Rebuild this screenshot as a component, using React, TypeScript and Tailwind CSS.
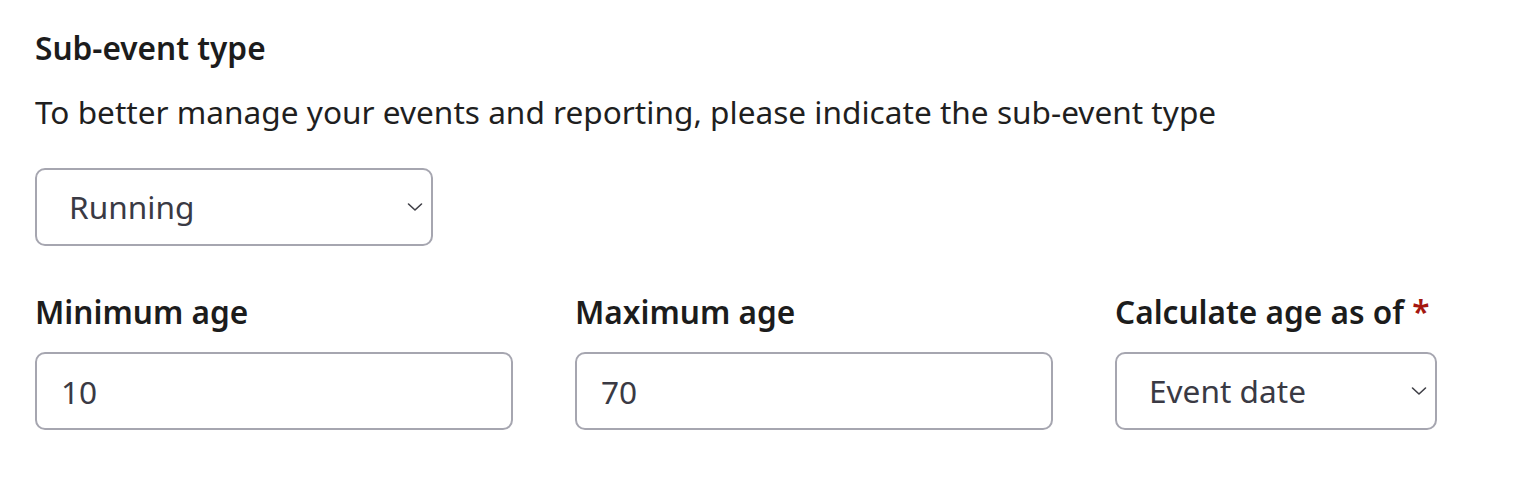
import React, { useState } from 'react';

const Chevron: React.FC = () => (
  <svg
    className="pointer-events-none absolute right-[10px] top-1/2 -translate-y-1/2"
    width="16"
    height="10"
    viewBox="0 0 16 10"
    fill="none"
  >
    <path d="M1.5 2 L8 8 L14.5 2" stroke="#3f3f46" strokeWidth="1.6" strokeLinecap="round" strokeLinejoin="round" />
  </svg>
);

interface SelectProps {
  value: string;
  options: string[];
  onChange: (v: string) => void;
  width: string;
}

const Select: React.FC<SelectProps> = ({ value, options, onChange, width }) => (
  <div className={`relative ${width}`}>
    <select
      value={value}
      onChange={(e) => onChange(e.target.value)}
      className="h-[78px] w-full appearance-none rounded-[10px] border-2 border-[#a6a6b0] bg-white pl-[32px] pr-[40px] text-[31.6px] text-[#3a3a44] outline-none"
    >
      {options.map((o) => (
        <option key={o} value={o}>
          {o}
        </option>
      ))}
    </select>
    <Chevron />
  </div>
);

export default function App() {
  const [type, setType] = useState('Running');
  const [minAge, setMinAge] = useState('10');
  const [maxAge, setMaxAge] = useState('70');
  const [asOf, setAsOf] = useState('Event date');

  return (
    <div className="min-h-[494px] bg-white pl-[35px] pt-[26px] font-['Noto_Sans',sans-serif] text-[#1c1c1c]">
      <h2 className="text-[31.6px] font-semibold leading-[44px]">Sub-event type</h2>
      <p className="mt-[20px] text-[31.6px] leading-[44px] text-[#1f1f1f]">
        To better manage your events and reporting, please indicate the sub-event type
      </p>

      <div className="mt-[34px]">
        <Select
          value={type}
          onChange={setType}
          options={['Running', 'Walking', 'Cycling', 'Swimming']}
          width="w-[398px]"
        />
      </div>

      <div className="mt-[44px] flex gap-[62px]">
        <div className="flex w-[478px] flex-col">
          <label className="text-[31.6px] font-semibold leading-[44px]">Minimum age</label>
          <input
            value={minAge}
            onChange={(e) => setMinAge(e.target.value)}
            className="mt-[18px] h-[78px] rounded-[10px] border-2 border-[#a6a6b0] bg-white px-[24px] text-[31.6px] text-[#3a3a44] outline-none"
          />
        </div>
        <div className="flex w-[478px] flex-col">
          <label className="text-[31.6px] font-semibold leading-[44px]">Maximum age</label>
          <input
            value={maxAge}
            onChange={(e) => setMaxAge(e.target.value)}
            className="mt-[18px] h-[78px] rounded-[10px] border-2 border-[#a6a6b0] bg-white px-[24px] text-[31.6px] text-[#3a3a44] outline-none"
          />
        </div>
        <div className="flex w-[322px] flex-col">
          <label className="text-[31.6px] font-semibold leading-[44px]">
            Calculate age as of <span className="text-[#a5170f]">*</span>
          </label>
          <div className="mt-[18px]">
            <Select
              value={asOf}
              onChange={setAsOf}
              options={['Event date', 'Registration date', 'Year end']}
              width="w-[322px]"
            />
          </div>
        </div>
      </div>
    </div>
  );
}
